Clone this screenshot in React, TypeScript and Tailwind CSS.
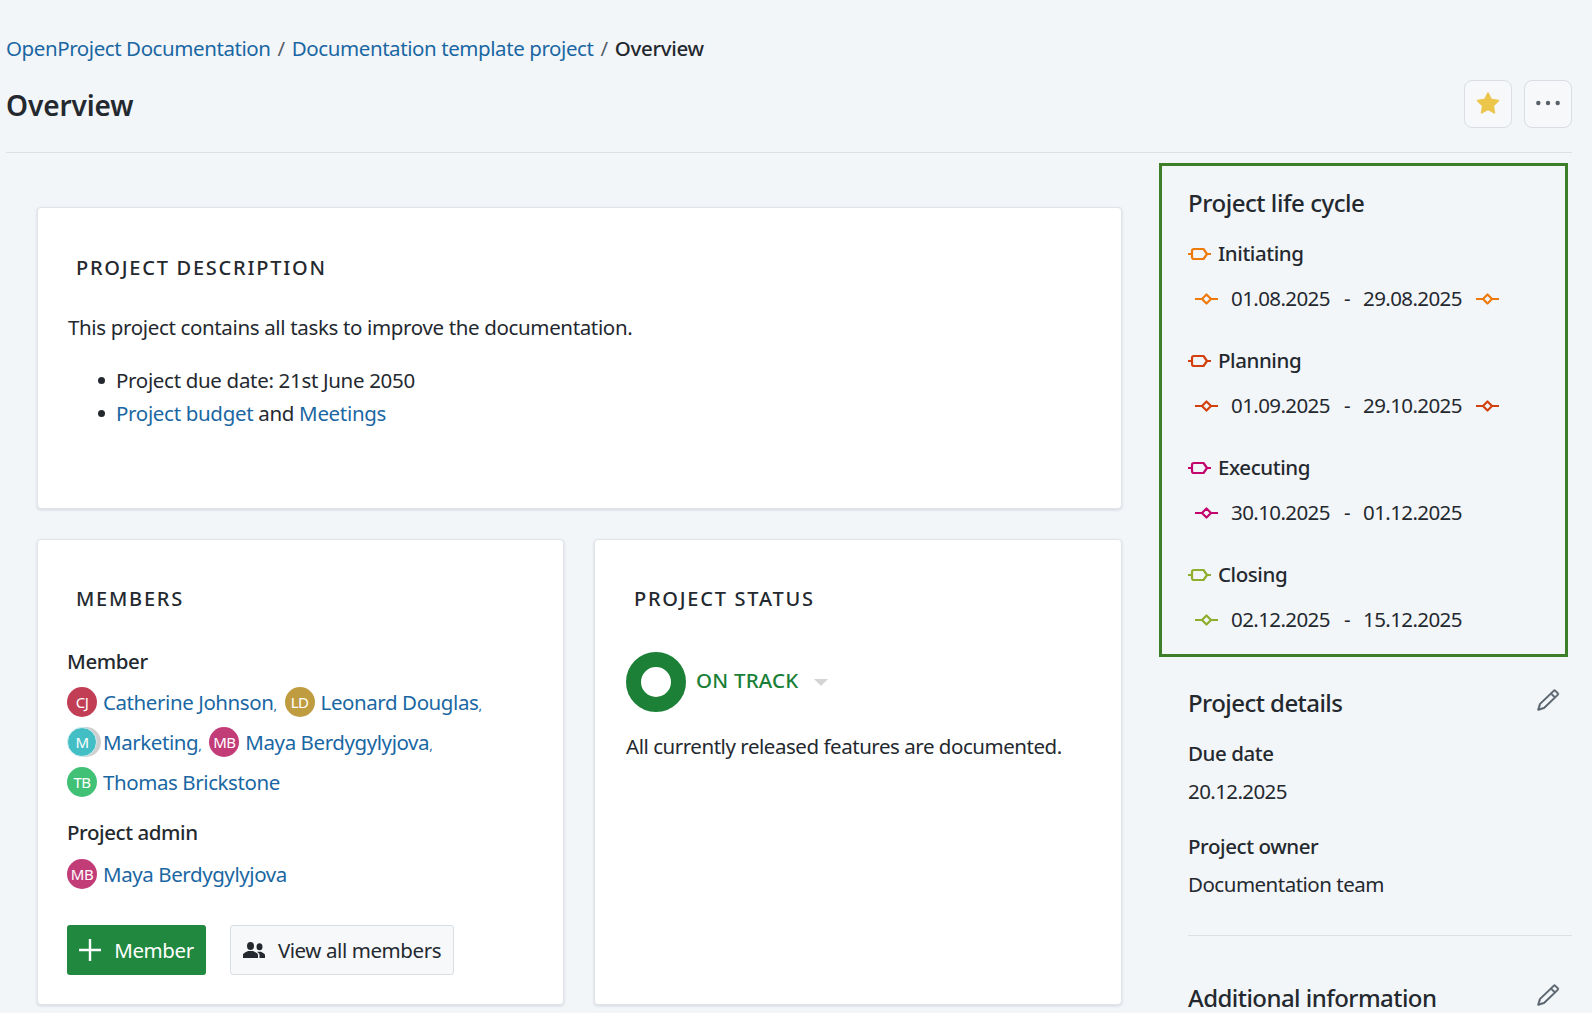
import { GoPencil, GoStarFill } from 'react-icons/go';

const font = { fontFamily: '"Noto Sans", sans-serif' };

const phases = [
  { name: 'Initiating', color: '#ee7a0c', start: '01.08.2025', end: '29.08.2025', endGate: true },
  { name: 'Planning', color: '#d2400f', start: '01.09.2025', end: '29.10.2025', endGate: true },
  { name: 'Executing', color: '#c2066e', start: '30.10.2025', end: '01.12.2025', endGate: false },
  { name: 'Closing', color: '#8fae2b', start: '02.12.2025', end: '15.12.2025', endGate: false },
];

const members = [
  { initials: 'CJ', name: 'Catherine Johnson', bg: 'bg-[#c13e54]', comma: true },
  { initials: 'LD', name: 'Leonard Douglas', bg: 'bg-[#c09c40]', comma: true },
  { initials: 'M', name: 'Marketing', bg: 'bg-[#43bec4]', comma: true, group: true },
  { initials: 'MB', name: 'Maya Berdygylyjova', bg: 'bg-[#c23c78]', comma: true },
  { initials: 'TB', name: 'Thomas Brickstone', bg: 'bg-[#41c176]', comma: false },
];

function PhaseIcon({ color }: { color: string }) {
  return (
    <svg width="23" height="14" viewBox="0 0 23 14" fill="none" stroke={color} strokeWidth="2.2" className="shrink-0">
      <path d="M0 7h4M19 7h4" />
      <path d="M6 2h9.500L19 7l-3.500 5H6A2 2 0 0 1 4 10V4a2 2 0 0 1 2-2Z" strokeLinejoin="round" />
    </svg>
  );
}

function GateIcon({ color }: { color: string }) {
  return (
    <svg width="23" height="14" viewBox="0 0 23 14" fill="none" stroke={color} strokeWidth="2.2" className="shrink-0">
      <path d="M0 7h7M16 7h7" />
      <path d="M11.5 2.500 16 7l-4.500 4.500L7 7Z" strokeLinejoin="round" />
    </svg>
  );
}

function Avatar({ initials, bg, group }: { initials: string; bg: string; group?: boolean }) {
  return (
    <span className="relative shrink-0 w-[30px] h-[30px]">
      {group ? <span className="absolute left-[4px] top-0 w-[30px] h-[30px] rounded-full bg-[#cfcfcf]"></span> : null}
      <span className={`absolute inset-0 rounded-full flex items-center justify-center text-white text-[15px] tracking-[-0.5px] ${bg} ${group ? 'border border-[#d5eef0]' : ''}`}>
        {initials}
      </span>
    </span>
  );
}

function CardTitle({ children, inset }: { children: string; inset: string }) {
  return (
    <h2 className={`${inset} text-[20px] leading-[28px] font-medium tracking-[1.75px] text-[#24292f] uppercase`}>
      {children}
    </h2>
  );
}

function Pencil() {
  return <GoPencil className="w-[24px] h-[24px] text-[#57606a] stroke-current stroke-[0.5] mt-[2px]" />;
}

export default function App() {
  return (
    <div style={font} className="w-[1592px] h-[1013px] overflow-hidden bg-[#f3f6f9] text-[#24292f] text-[20.5px] tracking-[-0.42px]">
      <div className="ml-[6px] mr-[20px] pt-[31px]">
        <nav className="flex items-center gap-[7px] h-[34px] leading-[34px]">
          <a className="text-[#1a67a3]">OpenProject Documentation</a>
          <span className="text-[#57606a]">/</span>
          <a className="text-[#1a67a3]">Documentation template project</a>
          <span className="text-[#57606a]">/</span>
          <span className="font-medium tracking-[-0.3px]">Overview</span>
        </nav>
        <div className="flex items-start justify-between h-[88px] border-b border-[#dde1e6]">
          <h1 className="mt-[20px] text-[28px] leading-[40px] font-semibold tracking-[-0.1px]">Overview</h1>
          <div className="flex gap-[12px] mt-[15px]">
            <button type="button" className="w-[48px] h-[48px] rounded-[8px] border border-[#d8dee4] bg-[#f6f8fa] flex items-center justify-center">
              <GoStarFill className="w-[24px] h-[24px] text-[#ecc54b]" />
            </button>
            <button type="button" className="w-[48px] h-[48px] rounded-[8px] border border-[#d8dee4] bg-[#f6f8fa] flex items-center justify-center">
              <svg width="24" height="6" viewBox="0 0 24 6" fill="#57606a" className="mb-[2px]">
                <circle cx="2.300" cy="3" r="2.200" />
                <circle cx="12" cy="3" r="2.200" />
                <circle cx="21.700" cy="3" r="2.200" />
              </svg>
            </button>
          </div>
        </div>
      </div>

      <div className="flex ml-[37px] mr-[20px]">
        <main className="w-[1085px] pt-[54px] flex flex-col gap-[30px] shrink-0">
          <section className="h-[302px] bg-white rounded-[4px] border border-[#e1e4e8] shadow-[0_1px_3px_rgba(60,70,90,0.18)] pt-[46px] px-[30px]">
            <CardTitle inset="ml-[8px]">Project description</CardTitle>
            <p className="mt-[29px] leading-[33px] tracking-[-0.35px]">This project contains all tasks to improve the documentation.</p>
            <ul className="mt-[20px] pl-[30px] leading-[33px] tracking-[-0.32px]">
              <li className="flex items-center gap-[11px]">
                <span className="w-[7px] h-[7px] rounded-full bg-[#24292f]"></span>
                <span>Project due date: 21st June 2050</span>
              </li>
              <li className="flex items-center gap-[11px]">
                <span className="w-[7px] h-[7px] rounded-full bg-[#24292f]"></span>
                <span>
                  <a className="text-[#1a67a3]">Project budget</a> and <a className="text-[#1a67a3]">Meetings</a>
                </span>
              </li>
            </ul>
          </section>

          <div className="flex gap-[30px]">
            <section className="w-[527px] h-[466px] bg-white rounded-[4px] border border-[#e1e4e8] shadow-[0_1px_3px_rgba(60,70,90,0.18)] pt-[45px] px-[29px]">
              <CardTitle inset="ml-[9px]">Members</CardTitle>
              <h3 className="mt-[32px] font-medium leading-[33px]">Member</h3>
              <div className="mt-[9px] flex flex-wrap gap-x-[8px] gap-y-[10px]">
                {members.map((m) => (
                  <div key={m.name} className="flex items-center gap-[6px] h-[30px]">
                    <Avatar initials={m.initials} bg={m.bg} group={m.group} />
                    <span>
                      <a className="text-[#1a67a3]">{m.name}</a>
                      {m.comma ? <span className="text-[#1a67a3] text-[13px]">,</span> : null}
                    </span>
                  </div>
                ))}
              </div>
              <h3 className="mt-[19px] font-medium leading-[33px]">Project admin</h3>
              <div className="mt-[10px] flex items-center gap-[6px] h-[30px]">
                <Avatar initials="MB" bg="bg-[#c23c78]" />
                <a className="text-[#1a67a3]">Maya Berdygylyjova</a>
              </div>
              <div className="mt-[36px] flex gap-[24px]">
                <button type="button" className="w-[139px] h-[50px] rounded-[3px] bg-[#20883f] text-white flex items-center justify-center gap-[13px]">
                  <svg width="22" height="22" viewBox="0 0 22 22" stroke="currentColor" strokeWidth="2.4">
                    <path d="M11 0v22M0 11h22" />
                  </svg>
                  <span>Member</span>
                </button>
                <button type="button" className="w-[224px] h-[50px] rounded-[3px] border border-[#d8dee4] bg-[#f6f8fa] flex items-center justify-center gap-[13px]">
                  <svg width="22" height="16" viewBox="0 0 22 16" fill="#24292f">
                    <ellipse cx="7.500" cy="4" rx="3.500" ry="4" />
                    <path d="M0 16v-3c0-2 3-2.800 5-4h5c2 1.200 5 2 5 4v3Z" />
                    <ellipse cx="16.500" cy="4.800" rx="3" ry="3.500" />
                    <path d="M16.500 16H22v-2.800c0-1.800-2.500-2.500-4-3.500h-3c-.3 0-.6.100-.8.200 1.500.9 2.300 2 2.300 3.300Z" />
                  </svg>
                  <span>View all members</span>
                </button>
              </div>
            </section>

            <section className="w-[528px] h-[466px] bg-white rounded-[4px] border border-[#e1e4e8] shadow-[0_1px_3px_rgba(60,70,90,0.18)] pt-[45px] px-[31px]">
              <CardTitle inset="ml-[8px]">Project status</CardTitle>
              <div className="mt-[39px] flex items-center">
                <span className="w-[60px] h-[60px] rounded-full border-[15px] border-[#1c8037] shrink-0"></span>
                <span className="ml-[10px] mb-[3px] text-[#1a7f37] font-medium tracking-[0.2px]">ON TRACK</span>
                <span className="ml-[16px] w-0 h-0 border-x-[7.5px] border-x-transparent border-t-[7px] border-t-[#d4d4d4]"></span>
              </div>
              <p className="mt-[18px] leading-[33px] tracking-[-0.46px]">All currently released features are documented.</p>
            </section>
          </div>
        </main>

        <aside className="ml-[37px] flex-1 pt-[10px]">
          <div className="w-[409px] h-[494px] border-[3px] border-[#3d7f29] pl-[26px] pt-[21px]">
            <h2 className="text-[24px] leading-[32px] font-medium tracking-[-0.45px]">Project life cycle</h2>
            <div className="mt-[18px] flex flex-col gap-[29px]">
              {phases.map((p) => (
                <div key={p.name}>
                  <div className="flex items-center h-[33px] gap-[7px] font-medium">
                    <PhaseIcon color={p.color} />
                    <span>{p.name}</span>
                  </div>
                  <div className="mt-[12px] ml-[7px] flex items-center h-[33px] tracking-[-0.6px]">
                    <GateIcon color={p.color} />
                    <span className="ml-[13px] w-[100px]">{p.start}</span>
                    <span className="w-[32px] text-center">-</span>
                    <span className="w-[100px]">{p.end}</span>
                    {p.endGate ? (
                      <span className="ml-[13px] flex">
                        <GateIcon color={p.color} />
                      </span>
                    ) : null}
                  </div>
                </div>
              ))}
            </div>
          </div>

          <div className="ml-[29px] mt-[29px]">
            <div className="flex justify-between items-start h-[34px] pr-[12px]">
              <h2 className="text-[24px] leading-[34px] font-medium tracking-[-0.55px]">Project details</h2>
              <Pencil />
            </div>
            <h3 className="mt-[17px] font-medium leading-[33px]">Due date</h3>
            <p className="mt-[5px] leading-[33px] tracking-[-0.6px]">20.12.2025</p>
            <h3 className="mt-[22px] font-medium leading-[33px]">Project owner</h3>
            <p className="mt-[5px] leading-[33px] tracking-[-0.5px]">Documentation team</p>
            <div className="mt-[34px] border-t border-[#dde1e6]"></div>
            <div className="mt-[45px] flex justify-between items-start h-[34px] pr-[12px]">
              <h2 className="text-[24px] leading-[34px] font-medium tracking-[-0.55px]">Additional information</h2>
              <Pencil />
            </div>
          </div>
        </aside>
      </div>
    </div>
  );
}
